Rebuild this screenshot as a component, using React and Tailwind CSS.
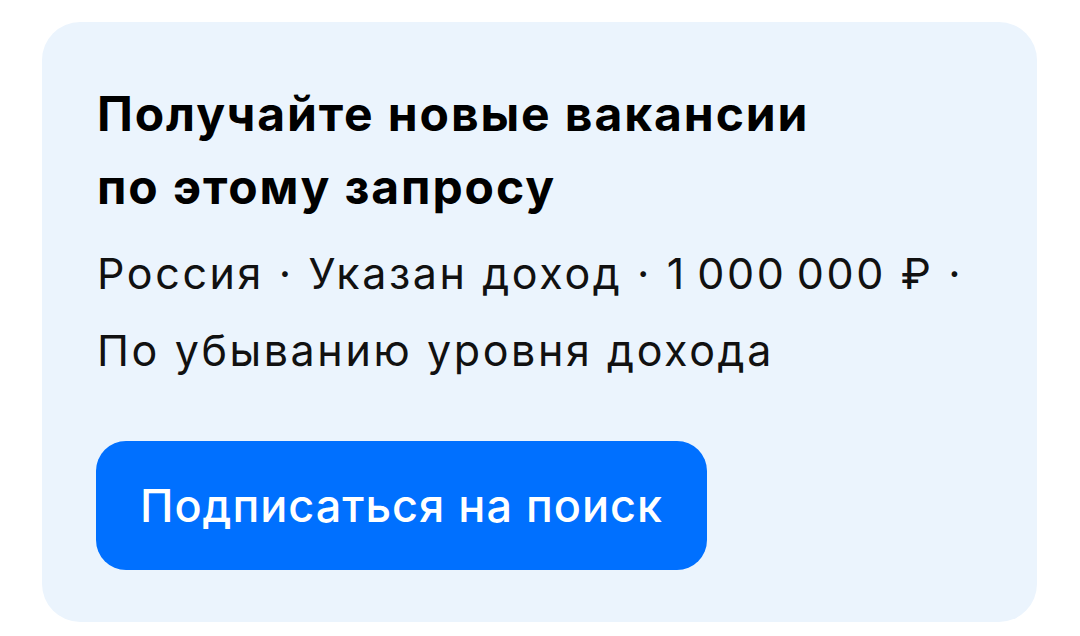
export default function App() {
  return (
    <div className="min-h-screen bg-white pt-[22px] pl-[42px] pr-[43px] font-['Inter','Liberation_Sans',sans-serif]">
      <div className="rounded-[38px] bg-[#ebf4fd] pl-[54px] pr-[40px] pt-[55px] pb-[52px]">
        <h2 className="pl-px text-[48px] font-bold leading-[73px] tracking-[1.9px] text-black">
          Получайте новые вакансии
          <br />
          по этому запросу
        </h2>
        <p className="mt-[12px] pl-px text-[43px] leading-[77px] tracking-[2.6px] text-[#111]">
          Россия · Указан доход · 1&thinsp;000&thinsp;000 ₽ ·
          <br />
          По убыванию уровня дохода
        </p>
        <button
          type="button"
          className="mt-[52px] flex h-[129px] w-[611px] items-center justify-center rounded-[30px] bg-[#0070ff] text-[45px] font-medium tracking-[1px] text-white"
        >
          Подписаться на поиск
        </button>
      </div>
    </div>
  );
}
